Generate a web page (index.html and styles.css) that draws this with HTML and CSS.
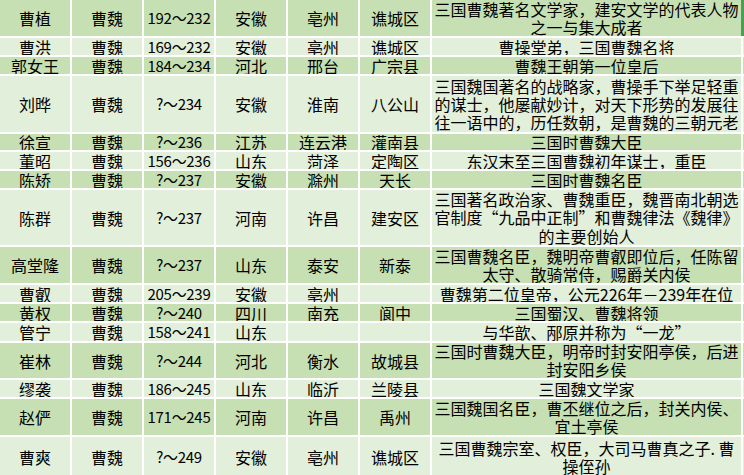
FILE: index.html
```html
<!DOCTYPE html>
<html lang="zh-CN">
<head>
<meta charset="utf-8">
<title>曹魏人物</title>
<link rel="stylesheet" href="styles.css">
</head>
<body>
<div class="sheet">
  <div class="row d"><div>曹植</div><div>曹魏</div><div class="num">192～232</div><div>安徽</div><div>亳州</div><div>谯城区</div><div class="desc m2">三国曹魏著名文学家，建安文学的代表人物<br>之一与集大成者</div><div class="x"></div></div>
  <div class="row l"><div>曹洪</div><div>曹魏</div><div class="num">169～232</div><div>安徽</div><div>亳州</div><div>谯城区</div><div class="desc">曹操堂弟，三国曹魏名将</div><div class="x"></div></div>
  <div class="row d"><div>郭女王</div><div>曹魏</div><div class="num">184～234</div><div>河北</div><div>邢台</div><div>广宗县</div><div class="desc">曹魏王朝第一位皇后</div><div class="x"></div></div>
  <div class="row l"><div>刘晔</div><div>曹魏</div><div class="num">?～234</div><div>安徽</div><div>淮南</div><div>八公山</div><div class="desc m3">三国魏国著名的战略家，曹操手下举足轻重<br>的谋士，他屡献妙计，对天下形势的发展往<br>往一语中的，历任数朝，是曹魏的三朝元老</div><div class="x"></div></div>
  <div class="row d"><div>徐宣</div><div>曹魏</div><div class="num">?～236</div><div>江苏</div><div>连云港</div><div>灌南县</div><div class="desc">三国时曹魏大臣</div><div class="x"></div></div>
  <div class="row l"><div>董昭</div><div>曹魏</div><div class="num">156～236</div><div>山东</div><div>菏泽</div><div>定陶区</div><div class="desc">东汉末至三国曹魏初年谋士，重臣</div><div class="x"></div></div>
  <div class="row d"><div>陈矫</div><div>曹魏</div><div class="num">?～237</div><div>安徽</div><div>滁州</div><div>天长</div><div class="desc">三国时曹魏名臣</div><div class="x"></div></div>
  <div class="row l"><div>陈群</div><div>曹魏</div><div class="num">?～237</div><div>河南</div><div>许昌</div><div>建安区</div><div class="desc m3">三国著名政治家、曹魏重臣，魏晋南北朝选<br>官制度“九品中正制”和曹魏律法《魏律》<br>的主要创始人</div><div class="x"></div></div>
  <div class="row d"><div>高堂隆</div><div>曹魏</div><div class="num">?～237</div><div>山东</div><div>泰安</div><div>新泰</div><div class="desc m2">三国曹魏名臣，魏明帝曹叡即位后，任陈留<br>太守、散骑常侍，赐爵关内侯</div><div class="x"></div></div>
  <div class="row l"><div>曹叡</div><div>曹魏</div><div class="num">205～239</div><div>安徽</div><div>亳州</div><div></div><div class="desc">曹魏第二位皇帝，公元226年－239年在位</div><div class="x"></div></div>
  <div class="row d"><div>黄权</div><div>曹魏</div><div class="num">?～240</div><div>四川</div><div>南充</div><div>阆中</div><div class="desc">三国蜀汉、曹魏将领</div><div class="x"></div></div>
  <div class="row l"><div>管宁</div><div>曹魏</div><div class="num">158～241</div><div>山东</div><div></div><div></div><div class="desc">与华歆、邴原并称为“一龙”</div><div class="x"></div></div>
  <div class="row d"><div>崔林</div><div>曹魏</div><div class="num">?～244</div><div>河北</div><div>衡水</div><div>故城县</div><div class="desc m2s">三国时曹魏大臣，明帝时封安阳亭侯，后进<br>封安阳乡侯</div><div class="x"></div></div>
  <div class="row l"><div>缪袭</div><div>曹魏</div><div class="num">186～245</div><div>山东</div><div>临沂</div><div>兰陵县</div><div class="desc">三国魏文学家</div><div class="x"></div></div>
  <div class="row d"><div>赵俨</div><div>曹魏</div><div class="num">171～245</div><div>河南</div><div>许昌</div><div>禹州</div><div class="desc m2">三国魏国名臣，曹丕继位之后，封关内侯、<br>宜土亭侯</div><div class="x"></div></div>
  <div class="row l"><div>曹爽</div><div>曹魏</div><div class="num">?～249</div><div>安徽</div><div>亳州</div><div>谯城区</div><div class="desc m2">三国曹魏宗室、权臣，大司马曹真之子. 曹<br>操侄孙</div><div class="x"></div></div>
  <div class="select-bar"></div>
</div>
</body>
</html>
```

FILE: styles.css
```css
html, body {
  margin: 0;
  padding: 0;
  background: #ffffff;
  overflow: hidden;
}

.sheet {
  position: relative;
  display: grid;
  grid-template-columns: 70px 70px 70px 70px 70px 70px 309px 10px;
  grid-template-rows: 36px 17px 17px 56px 16px 17px 17px 55px 36px 17px 17px 18px 35px 17px 36px 40px;
  gap: 2px;
  width: 760px;
  background: #ffffff;
  font-family: "Noto Sans CJK SC", "Noto Sans", sans-serif;
  font-size: 16px;
  line-height: 16px;
  color: #000000;
}

.row {
  display: contents;
}

.row > div {
  display: flex;
  align-items: center;
  justify-content: center;
  text-align: center;
  overflow: hidden;
  white-space: nowrap;
}

.row.d > div {
  background: #c6e0b4;
}

.row.l > div {
  background: #e2efda;
}

.row > .num {
  font-size: 15px;
  letter-spacing: -0.3px;
}

.row > .m2 {
  line-height: 18px;
}

.row > .m2s {
  line-height: 17.5px;
}

.row > .m3 {
  line-height: 18.3px;
}

.select-bar {
  position: absolute;
  left: 741px;
  top: 0;
  width: 3px;
  height: 36px;
  background: #45a34f;
}
```
